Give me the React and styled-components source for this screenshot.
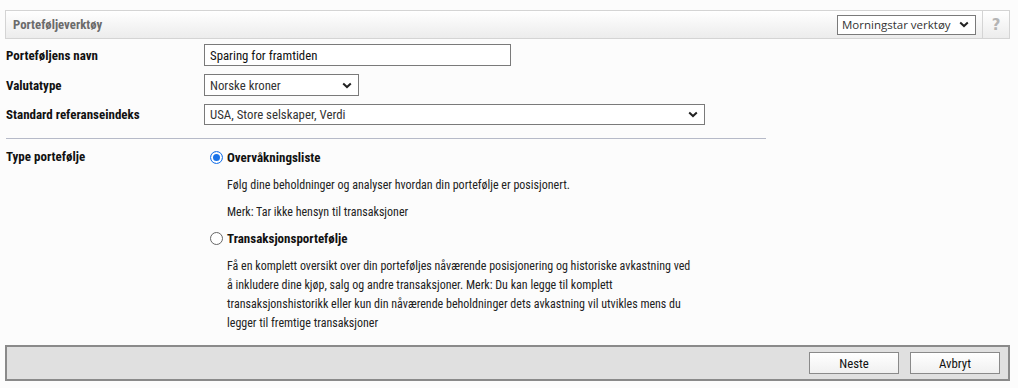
import React from "react";
import styled, { createGlobalStyle } from "styled-components";

const GlobalStyle = createGlobalStyle`
  body {
    margin: 0;
    background: #fcfcfc;
    font-family: Roboto, "DejaVu Sans Condensed", sans-serif;
    font-stretch: 75%;
    font-size: 12px;
    color: #111;
  }
`;

export default function App() {
  return (
    <>
      <GlobalStyle />
      <Page>
        <TitleBar>
          <Title>Porteføljeverktøy</Title>
          <ToolSelect>
            <span>Morningstar verktøy</span>
            <Chevron />
          </ToolSelect>
          <Help>?</Help>
        </TitleBar>

        <Form>
          <Row>
            <Label>Porteføljens navn</Label>
            <TextInput>Sparing for framtiden</TextInput>
          </Row>
          <Row>
            <Label>Valutatype</Label>
            <Select width={155}>
              <span>Norske kroner</span>
              <Chevron />
            </Select>
          </Row>
          <Row>
            <Label>Standard referanseindeks</Label>
            <Select width={501} height={21}>
              <span>USA, Store selskaper, Verdi</span>
              <Chevron />
            </Select>
          </Row>
        </Form>

        <Divider />

        <TypeSection>
          <Label>Type portefølje</Label>
          <Options>
            <Option>
              <Radio checked />
              <OptionTitle>Overvåkningsliste</OptionTitle>
            </Option>
            <Desc first>Følg dine beholdninger og analyser hvordan din portefølje er posisjonert.</Desc>
            <Desc>Merk: Tar ikke hensyn til transaksjoner</Desc>
            <Option>
              <Radio />
              <OptionTitle>Transaksjonsportefølje</OptionTitle>
            </Option>
            <Paragraph>
              Få en komplett oversikt over din porteføljes nåværende posisjonering og historiske avkastning ved
              å inkludere dine kjøp, salg og andre transaksjoner. Merk: Du kan legge til komplett
              transaksjonshistorikk eller kun din nåværende beholdninger dets avkastning vil utvikles mens du
              legger til fremtige transaksjoner
            </Paragraph>
          </Options>
        </TypeSection>

        <Footer>
          <Button>Neste</Button>
          <Button>Avbryt</Button>
        </Footer>
      </Page>
    </>
  );
}

function Chevron() {
  return (
    <svg width="10" height="7" viewBox="0 0 10 7">
      <path d="M1.2 1.6 L5 5.1 L8.8 1.6" fill="none" stroke="#222" strokeWidth="2" />
    </svg>
  );
}

const Page = styled.div`
  width: 1018px;
  padding: 10px 8px 0 5px;
  box-sizing: border-box;
`;

const TitleBar = styled.div`
  display: flex;
  align-items: center;
  height: 27px;
  border: 1px solid #d4d4d4;
  background: linear-gradient(#ffffff, #ececec);
`;

const Title = styled.div`
  flex: 1;
  padding-left: 7px;
  font-weight: bold;
  font-size: 12.8px;
  color: #6b6b6b;
`;

const ToolSelect = styled.div`
  display: flex;
  align-items: center;
  justify-content: space-between;
  width: 139px;
  height: 20px;
  box-sizing: border-box;
  padding: 0 6px 0 4px;
  border: 1px solid #7a7a7a;
  background: #fff;
  font-family: "Open Sans", "DejaVu Sans", sans-serif;
  font-stretch: 100%;
  font-size: 11.5px;
  color: #333;
  margin-right: 6px;
`;

const Help = styled.div`
  width: 26px;
  height: 27px;
  border-left: 1px solid #d4d4d4;
  display: flex;
  align-items: center;
  justify-content: center;
  font-family: "DejaVu Sans", Verdana, sans-serif;
  font-stretch: 100%;
  font-weight: bold;
  font-size: 15px;
  color: #b4b4b4;
`;

const Form = styled.div`
  display: flex;
  flex-direction: column;
  gap: 8px;
  padding: 5px 0 0 1px;
`;

const Row = styled.div`
  display: flex;
  align-items: center;
`;

const Label = styled.div`
  width: 198px;
  flex-shrink: 0;
  font-weight: bold;
  font-size: 13px;
`;

const TextInput = styled.div`
  width: 307px;
  height: 22px;
  box-sizing: border-box;
  border: 1px solid #7a7a7a;
  background: #fff;
  padding: 0 5px;
  display: flex;
  align-items: center;
  font-size: 12.8px;
`;

const Select = styled.div`
  width: ${(p) => p.width}px;
  height: ${(p) => p.height || 22}px;
  box-sizing: border-box;
  border: 1px solid #7a7a7a;
  background: #fff;
  padding: 0 6px 0 5px;
  display: flex;
  align-items: center;
  justify-content: space-between;
  font-size: 12.8px;
  color: #333;
`;

const Divider = styled.div`
  width: 760px;
  height: 1px;
  background: #b6bac8;
  margin: 13px 0 0 1px;
`;

const TypeSection = styled.div`
  display: flex;
  padding: 10px 0 0 1px;
`;

const Options = styled.div`
  display: flex;
  flex-direction: column;
  padding-left: 6px;
`;

const Option = styled.div`
  display: flex;
  align-items: center;
  gap: 4px;
  height: 16px;
`;

const Radio = styled.span`
  width: 13px;
  height: 13px;
  box-sizing: border-box;
  border-radius: 50%;
  border: ${(p) => (p.checked ? "1px solid #1a73e8" : "1px solid #666")};
  background: #fff;
  box-shadow: ${(p) => (p.checked ? "inset 0 0 0 2px #fff, inset 0 0 0 7px #1a73e8" : "none")};
`;

const OptionTitle = styled.span`
  font-weight: bold;
  font-size: 13px;
`;

const Desc = styled.div`
  padding-left: 17px;
  margin-top: ${(p) => (p.first ? 12 : 10)}px;
  margin-bottom: 1px;
  line-height: 16px;
  color: #222;
  & + ${Option} {
    margin-top: 9px;
  }
`;

const Paragraph = styled.div`
  padding-left: 17px;
  margin-top: 11px;
  width: 466px;
  line-height: 19px;
  color: #222;
`;

const Footer = styled.div`
  margin-top: 12px;
  height: 36px;
  box-sizing: border-box;
  border: 2px solid #8a8a8a;
  background: #e0e0e0;
  display: flex;
  align-items: center;
  justify-content: flex-end;
  gap: 11px;
  padding-right: 8px;
`;

const Button = styled.div`
  width: 90px;
  height: 22px;
  box-sizing: border-box;
  border: 1px solid #8a8a8a;
  background: linear-gradient(#ffffff, #f0f0f0);
  display: flex;
  align-items: center;
  justify-content: center;
  font-size: 12.8px;
`;
